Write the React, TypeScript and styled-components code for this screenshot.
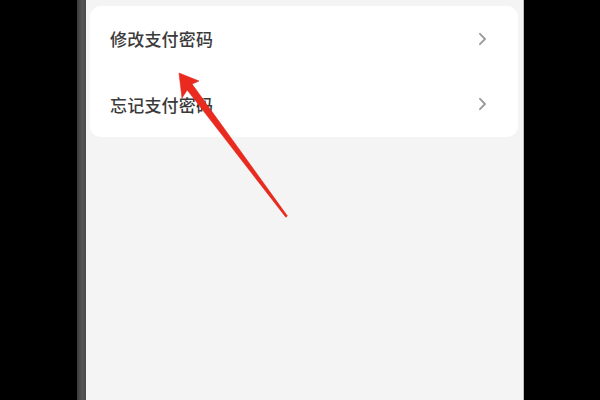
import React from 'react';
import styled, { createGlobalStyle } from 'styled-components';

const GlobalStyle = createGlobalStyle`
  html, body {
    margin: 0;
    padding: 0;
    background: #000;
  }
  body {
    font-family: "Noto Sans CJK SC", "Noto Sans", sans-serif;
  }
`;

const Page = styled.div`
  position: relative;
  width: 600px;
  height: 400px;
  display: flex;
  background: #000;
  overflow: hidden;
`;

const Side = styled.div<{ $width: number }>`
  width: ${(p) => p.$width}px;
  flex-shrink: 0;
  background: #000;
`;

const Bezel = styled.div`
  width: 9px;
  flex-shrink: 0;
  background: linear-gradient(to right, #3c3c3c, #555 60%, #4a4a4a);
`;

const EdgeLine = styled.div`
  width: 1px;
  flex-shrink: 0;
  background: #bdbdbd;
`;

const Screen = styled.div`
  width: 437px;
  flex-shrink: 0;
  background: #f4f4f4;
  padding: 6px 5px 0 4px;
  box-sizing: border-box;
`;

const Card = styled.div`
  background: #fff;
  border-radius: 11px;
  display: flex;
  flex-direction: column;
`;

const Row = styled.div`
  height: 65.5px;
  display: flex;
  align-items: center;
  justify-content: space-between;
  padding: 0 31px 0 20px;
`;

const Label = styled.span`
  font-size: 17px;
  font-weight: 500;
  color: #3a3a3a;
  letter-spacing: 0.2px;
`;

const Chevron = () => (
  <svg width="9" height="14" viewBox="0 0 9 14">
    <path d="M2 1.8 L7 7 L2 12.2" fill="none" stroke="#9c9c9c" strokeWidth="1.9" strokeLinecap="round" strokeLinejoin="round" />
  </svg>
);

const Overlay = styled.svg`
  position: absolute;
  left: 0;
  top: 0;
  pointer-events: none;
`;

const items = ['修改支付密码', '忘记支付密码'];

export default function App() {
  return (
    <>
      <GlobalStyle />
      <Page>
        <Side $width={77} />
        <Bezel />
        <Screen>
          <Card>
            {items.map((t) => (
              <Row key={t}>
                <Label>{t}</Label>
                <Chevron />
              </Row>
            ))}
          </Card>
        </Screen>
        <EdgeLine />
        <Side $width={76} />
        <Overlay width="600" height="400" viewBox="0 0 600 400">
          <polygon
            points="179,73 199,81 192,84 287.4,216 285.8,217.2 187.2,90 182,98"
            fill="#ea2a1e"
            stroke="#e0261b"
            strokeWidth="0.6"
            strokeLinejoin="round"
          />
        </Overlay>
      </Page>
    </>
  );
}
